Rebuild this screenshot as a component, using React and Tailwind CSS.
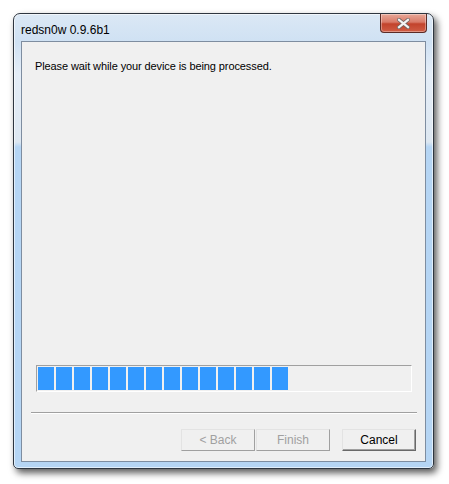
import React from 'react';

const blocks = Array.from({ length: 14 });

function CloseButton() {
  return (
    <div className="flex h-[19px] w-[47px] items-center justify-center rounded-b-[4px] border border-t-0 border-[#5a2b26] bg-[linear-gradient(to_bottom,#e8a898_0%,#d97a68_45%,#c2432c_55%,#d05d45_100%)] shadow-[inset_0_0_0_1px_rgba(255,255,255,0.35)]">
      <svg width="13" height="11" viewBox="0 0 13 11">
        <path d="M2 1.8 L11 9.2 M11 1.8 L2 9.2" stroke="#6e6462" strokeWidth="3.8" strokeLinecap="square" />
        <path d="M2 1.8 L11 9.2 M11 1.8 L2 9.2" stroke="#f4f4f4" strokeWidth="2.2" strokeLinecap="square" />
      </svg>
    </div>
  );
}

function WizardButton({ children, disabled }) {
  return (
    <div
      className={
        'flex h-[22px] w-[74px] items-center justify-center border bg-[#f0f0f0] text-[12px] ' +
        (disabled
          ? 'border-t-[#e3e3e3] border-l-[#e3e3e3] border-r-[#a0a0a0] border-b-[#a0a0a0] text-[#a0a0a0]'
          : 'border-t-[#e3e3e3] border-l-[#e3e3e3] border-r-[#696969] border-b-[#696969] text-black shadow-[inset_-1px_-1px_0_#a0a0a0]')
      }
    >
      {children}
    </div>
  );
}

export default function App() {
  return (
    <div className="h-[484px] w-[449px] bg-white pl-[13px] pt-[13px] font-['Liberation_Sans',Arial,sans-serif]">
      <div className="flex h-[456px] w-[421px] flex-col rounded-t-[7px] rounded-b-[5px] border border-[#2e3640] bg-[linear-gradient(to_bottom,#dbe8f5_0px,#cfe1f3_28px,#e4edf7_60px,#dde7f1_128px,#b5d5f4_133px,#b5d5f4_100%)] px-[7px] pb-[6px] shadow-[3px_4px_7px_rgba(0,0,0,0.65),inset_0_0_0_1px_rgba(255,255,255,0.6)]">
        <div className="flex h-[27px] items-start justify-between">
          <span className="pt-[7px] text-[12px] text-black">redsn0w 0.9.6b1</span>
          <div className="mr-[-1px]">
            <CloseButton />
          </div>
        </div>
        <div className="flex flex-1 flex-col border border-[#7e8da0] bg-[#f0f0f0]">
          <p className="pl-[13px] pt-[16px] text-[11px] tracking-[-0.1px] text-black">Please wait while your device is being processed.</p>
          <div className="flex-1" />
          <div className="ml-[14px] flex h-[27px] w-[376px] gap-[2px] border border-t-[#a0a0a0] border-l-[#a0a0a0] border-b-white border-r-white p-[1px]">
            {blocks.map((_, i) => (
              <div key={i} className="h-full w-[16px] bg-[#3399ff]" />
            ))}
          </div>
          <div className="ml-[9px] mt-[20px] h-[2px] w-[386px] border-t border-t-[#a0a0a0] border-b border-b-white" />
          <div className="mb-[10px] mt-[15px] mr-[9px] flex justify-end gap-[1px]">
            <WizardButton disabled>&lt; Back</WizardButton>
            <WizardButton disabled>Finish</WizardButton>
            <div className="w-[10px]" />
            <WizardButton>Cancel</WizardButton>
          </div>
        </div>
      </div>
    </div>
  );
}
